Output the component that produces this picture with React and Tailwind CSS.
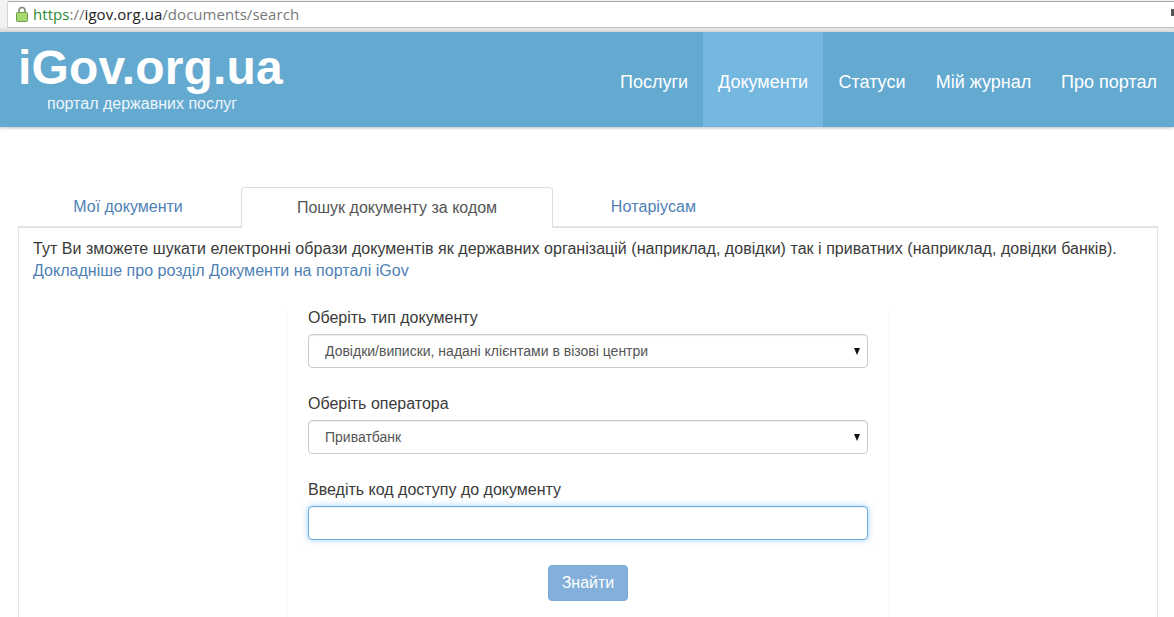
import React from "react";

const font = { fontFamily: '"Liberation Sans", Arial, sans-serif' };

const LockIcon = () => (
  <svg width="12" height="16" viewBox="0 0 12 16" className="shrink-0 mt-[-2px]">
    <path d="M3 7V4.5a3 3 0 0 1 6 0V7" fill="none" stroke="#7d8a72" strokeWidth="1.6" />
    <rect x="0.5" y="6.5" width="11" height="9" rx="1" fill="#a6da70" stroke="#6f9a48" />
  </svg>
);

const AddressBar = () => (
  <div className="h-[32px] bg-[#e3e3e3] shrink-0">
    <div className="h-[28px] bg-[#f2f2f2] pl-[7px] pt-[1px]">
      <div className="h-[27px] bg-white border-t border-b border-l border-t-[#a9a9a9] border-b-[#c4c4c4] border-l-[#d4d4d4] rounded-tl-[2px] flex items-center pl-[8px] relative">
        <LockIcon />
        <div className="ml-[5px] text-[15px] text-[#7a7a7a] font-['Open_Sans','Noto_Sans',sans-serif] tracking-[0.05px]">
          <span className="text-[#2e8b2e]">https</span>
          <span>://</span>
          <span className="text-[#222]">igov.org.ua</span>
          <span>/documents/search</span>
        </div>
        {/* cut off extension icon at the window edge */}
        <div className="absolute right-0 top-[7px] w-[3px] h-[7px] bg-[#555]" />
      </div>
    </div>
  </div>
);

const navItems = [
  { label: "Послуги", width: "w-[98px]" },
  { label: "Документи", width: "w-[120px]" },
  { label: "Статуси", width: "w-[98px]" },
  { label: "Мій журнал", width: "w-[125px]" },
  { label: "Про портал", width: "w-[126px]" },
];

const Header = () => (
  <header className="h-[95px] bg-[#63a9d0] flex justify-between pl-[18px] pr-[2px] shadow-[0_1px_3px_rgba(0,0,0,0.25)] relative shrink-0">
    <div className="text-white">
      <div className="text-[48px] font-bold leading-[48px] mt-[12px] tracking-[0.15px]">iGov.org.ua</div>
      <div className="text-[16px] leading-[18px] text-[#eef6fb] pl-[29px] mt-[3px]">портал державних послуг</div>
    </div>
    <nav className="flex">
      {navItems.map((item) => (
        <a
          key={item.label}
          className={`${item.width} pt-[6px] flex items-center justify-center text-[18px] text-white ${
            item.label === "Документи" ? "bg-[#74b7df]" : ""
          }`}
        >
          {item.label}
        </a>
      ))}
    </nav>
  </header>
);

const Tabs = () => (
  <div className="flex ml-[19px] mt-[60px] h-[41px] relative z-10 shrink-0">
    <a className="w-[218px] h-[40px] flex items-center justify-center text-[16px] text-[#4f81b5] mr-[4px]">
      Мої документи
    </a>
    <a className="w-[312px] h-[41px] flex items-center justify-center text-[16px] text-[#555] bg-white border border-[#ddd] border-b-0 rounded-t-[4px] mr-[4px]">
      Пошук документу за кодом
    </a>
    <a className="w-[193px] h-[40px] flex items-center justify-center text-[16px] text-[#4f81b5] tracking-[0.1px]">
      Нотаріусам
    </a>
  </div>
);

const SelectField = ({ label, value }) => (
  <div className="mb-[26px]">
    <label className="block text-[16px] leading-[20px] text-[#3a3a3a] mb-[6px]">{label}</label>
    <div className="relative">
      <select
        defaultValue={value}
        className="w-full h-[34px] appearance-none bg-white border border-[#ccc] rounded-[4px] pl-[16px] text-[14px] text-[#555] shadow-[inset_0_1px_1px_rgba(0,0,0,0.075)]"
      >
        <option>{value}</option>
      </select>
      <svg width="6" height="7" viewBox="0 0 6 7" className="absolute right-[8px] top-[14px]">
        <path d="M0 0h6L3 7z" fill="#111" />
      </svg>
    </div>
  </div>
);

export default function App() {
  return (
    <div className="w-[1174px] h-[617px] overflow-hidden bg-white flex flex-col" style={font}>
      <AddressBar />
      <Header />
      <Tabs />
      <main className="ml-[18px] w-[1140px] flex-1 border-t-2 border-l border-r border-[#e4e4e4] pl-[14px] pr-[14px] pt-[10px] mt-[-2px]">
        <p className="text-[16px] leading-[22px] text-[#3a3a3a] tracking-[0.03px]">
          Тут Ви зможете шукати електронні образи документів як державних організацій (наприклад, довідки) так і приватних (наприклад, довідки банків).
          <br />
          <a className="text-[#4f81b5]">Докладніше про розділ Документи на порталі iGov</a>
        </p>
        <form className="w-[602px] ml-[254px] mt-[26px] h-[400px] px-[20px] border-l border-r border-[#fafafa]">
          <SelectField label="Оберіть тип документу" value="Довідки/виписки, надані клієнтами в візові центри" />
          <SelectField label="Оберіть оператора" value="Приватбанк" />
          <label className="block text-[16px] leading-[20px] text-[#3a3a3a] mb-[6px]">Введіть код доступу до документу</label>
          <input className="block w-full h-[34px] bg-white border border-[#66afe9] rounded-[4px] outline-none shadow-[inset_0_1px_1px_rgba(0,0,0,0.075),0_0_6px_rgba(102,175,233,0.6)]" />
          <div className="flex justify-center mt-[25px]">
            <button
              type="button"
              className="w-[80px] h-[36px] bg-[#82b0da] border border-[#7aa8d4] rounded-[4px] text-white text-[16px]"
            >
              Знайти
            </button>
          </div>
        </form>
      </main>
    </div>
  );
}
